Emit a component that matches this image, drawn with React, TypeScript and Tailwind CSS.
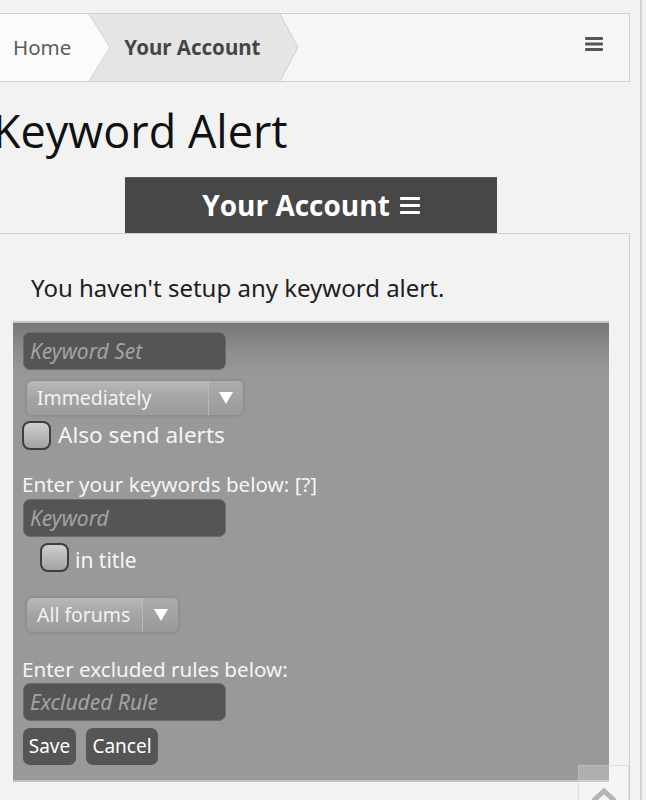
import React from "react";

function Burger({ w, h, bar, color }: { w: number; h: number; bar: number; color: string }) {
  const gap = (h - bar * 3) / 2;
  return (
    <svg width={w} height={h} viewBox={`0 0 ${w} ${h}`}>
      <rect x="0" y="0" width={w} height={bar} rx="1" fill={color} />
      <rect x="0" y={bar + gap} width={w} height={bar} rx="1" fill={color} />
      <rect x="0" y={2 * (bar + gap)} width={w} height={bar} rx="1" fill={color} />
    </svg>
  );
}

function TextInput({ placeholder }: { placeholder: string }) {
  return (
    <div className="w-[203px] h-[38px] rounded-[7px] bg-[#555555] border border-[#6b6b6b] flex items-center pl-[6px]">
      <span className="italic text-[21px] text-[#a3a3a3] leading-none">{placeholder}</span>
    </div>
  );
}

function Select({ label, width, arrowW }: { label: string; width: number; arrowW: number }) {
  return (
    <div
      className="h-[34px] rounded-[6px] flex overflow-hidden shadow-[0_0_4px_rgba(0,0,0,0.18)] bg-gradient-to-b from-[#b9b9b9] via-[#a4a4a4] to-[#9c9c9c]"
      style={{ width }}
    >
      <div className="flex-1 flex items-center pl-[10px] text-[19.4px] text-[#f3f3f3] leading-none">{label}</div>
      <div
        className="h-full flex items-center justify-center bg-gradient-to-b from-[#acacac] to-[#9a9a9a] border-l border-[#b8b8b8]"
        style={{ width: arrowW }}
      >
        <svg width="14" height="12" viewBox="0 0 14 12">
          <polygon points="0,0 14,0 7,12" fill="#ffffff" />
        </svg>
      </div>
    </div>
  );
}

function Checkbox() {
  return (
    <div className="w-[29px] h-[29px] rounded-[8px] border-2 border-[#3e3e3e] bg-gradient-to-b from-[#cfcfcf] to-[#a2a2a2] shrink-0" />
  );
}

export default function App() {
  return (
    <div className="w-[646px] h-[800px] overflow-hidden bg-[#f2f2f2] relative font-['Noto_Sans',sans-serif]">
      <div className="w-[642px] h-[800px] border-r-2 border-[#d3d3d3]">
        {/* Breadcrumb */}
        <div className="pt-[13px]">
          <div className="relative w-[630px] h-[69px] border-y border-r border-[#d0d0d0] bg-[#f6f6f6] flex items-center">
            <svg className="absolute left-0 top-0" width="300" height="67" viewBox="0 0 300 67">
              <polygon points="0,0 89,0 110,33.5 89,67 0,67" fill="#fbfbfb" />
              <polygon points="89,0 280,0 298,33.5 280,67 89,67 110,33.5" fill="#e5e5e5" />
              <polyline points="89,0 110,33.5 89,67" fill="none" stroke="#d2d2d2" strokeWidth="1" />
              <polyline points="280,0 298,33.5 280,67" fill="none" stroke="#cfcfcf" strokeWidth="1" />
            </svg>
            <span className="relative ml-[13px] text-[20.5px] text-[#5c5c5c]">Home</span>
            <span className="relative ml-[53px] text-[20.5px] font-bold text-[#454545]">Your Account</span>
            <div className="relative ml-auto mr-[26px] mt-[-7px]">
              <Burger w={18} h={14} bar={3} color="#565656" />
            </div>
          </div>
        </div>

        {/* Title */}
        <h1 className="mt-[22px] ml-[-7px] text-[45px] leading-[53px] text-[#111111] font-normal font-['Open_Sans',sans-serif]">Keyword Alert</h1>

        {/* Tab */}
        <div className="mt-[20px] ml-[125px] w-[372px] h-[56px] bg-[#474747] border-t border-[#5c5c5c] flex items-center justify-center gap-[10px] font-['Open_Sans',sans-serif]">
          <span className="text-[28px] font-bold text-white leading-none mt-[-2px]">Your Account</span>
          <Burger w={20} h={17} bar={3} color="#ffffff" />
        </div>

        {/* Panel */}
        <div className="w-[630px] h-[600px] border-t border-r border-[#cfcfcf] bg-[#f2f2f2]">
          <p className="pt-[39px] pl-[31px] text-[24px] leading-[30px] text-[#1e1e1e]">
            You haven't setup any keyword alert.
          </p>

          {/* Form */}
          <div className="mt-[18px] ml-[13px] w-[596px] h-[461px] border-t-2 border-b-2 border-t-[#c4c4c4] border-b-[#c2c2c2] bg-[linear-gradient(to_bottom,#777777_0px,#8f8f8f_30px,#999999_55px,#999999_100%)] pl-[10px] pt-[9px] flex flex-col text-[#f5f5f5]">
            <TextInput placeholder="Keyword Set" />
            <div className="mt-[11px] ml-[4px]">
              <Select label="Immediately" width={216} arrowW={35} />
            </div>
            <div className="mt-[6px] ml-[-1px] flex items-center gap-[7px]">
              <Checkbox />
              <span className="text-[22.5px] leading-none">Also send alerts</span>
            </div>
            <div className="mt-[23px] ml-[-1px] text-[20.6px] leading-[22px]">Enter your keywords below: [?]</div>
            <div className="mt-[4px]">
              <TextInput placeholder="Keyword" />
            </div>
            <div className="mt-[6px] ml-[17px] flex items-center gap-[6px]">
              <Checkbox />
              <span className="text-[21px] leading-none mt-[6px]">in title</span>
            </div>
            <div className="mt-[26px] ml-[4px]">
              <Select label="All forums" width={151} arrowW={36} />
            </div>
            <div className="mt-[26px] ml-[-1px] text-[20.6px] leading-[22px]">Enter excluded rules below:</div>
            <div className="mt-[3px]">
              <TextInput placeholder="Excluded Rule" />
            </div>
            <div className="mt-[7px] flex gap-[10px]">
              <div className="w-[53px] h-[37px] rounded-[7px] bg-[#555555] flex items-center justify-center text-[19px] text-white">Save</div>
              <div className="w-[72px] h-[37px] rounded-[7px] bg-[#555555] flex items-center justify-center text-[19px] text-white">Cancel</div>
            </div>
          </div>
        </div>
      </div>

      {/* Scroll to top */}
      <div className="absolute left-[578px] top-[765px] w-[51px] h-[50px] bg-[rgba(255,255,255,0.22)] border border-[rgba(200,200,200,0.5)] flex justify-center pt-[22px]">
        <svg width="26" height="14" viewBox="0 0 26 14">
          <polyline points="2,13 13,3 24,13" fill="none" stroke="#b5b5b5" strokeWidth="5" />
        </svg>
      </div>
    </div>
  );
}
